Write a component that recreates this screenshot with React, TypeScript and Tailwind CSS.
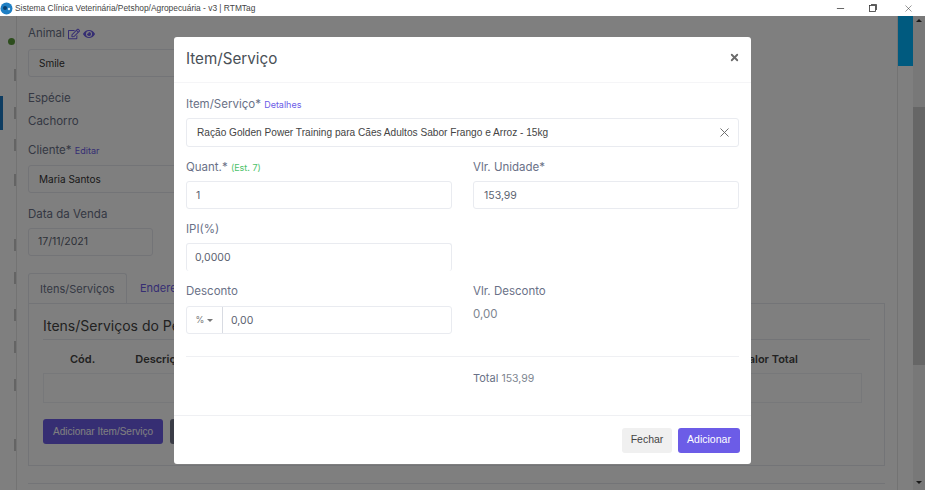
import { X, Minus } from 'lucide-react';
import { FaEye, FaRegEdit } from 'react-icons/fa';

const labelCls = "block text-[11.5px] leading-[16px] text-[#6a7187]";
const inputCls = "h-[28px] w-full rounded-[3px] border border-[#e9ebf0] bg-white text-[10.5px] leading-[27px] text-[#5b6270]";

function TitleBar() {
  return (
    <div className="flex h-[16px] items-center justify-between bg-white">
      <div className="flex items-center gap-[2px]">
        <svg width="13" height="13" viewBox="0 0 13 13">
          <circle cx="6.5" cy="6.5" r="6" fill="#1f7fc4" />
          <circle cx="5" cy="6" r="2" fill="#0b3f6e" />
          <circle cx="9" cy="7" r="1.2" fill="#cfe6f7" />
        </svg>
        <span className="text-[8.4px] leading-[16px] text-[#444]" style={{ fontFamily: '"Liberation Sans", sans-serif' }}>Sistema Clínica Veterinária/Petshop/Agropecuária - v3 | RTMTag</span>
      </div>
      <div className="flex items-center text-[#222]">
        <Minus className="mr-[23px] h-[11px] w-[11px]" strokeWidth={1.5} />
        <svg className="mr-[26px]" width="8" height="8" viewBox="0 0 8 8" fill="none" stroke="#333" strokeWidth="0.8">
          <rect x="0.5" y="1.5" width="6" height="6" />
          <path d="M2 0.5h5.5v5.5" />
        </svg>
        <X className="mr-[11px] h-[11px] w-[11px]" strokeWidth={1} />
      </div>
    </div>
  );
}

function Sidebar() {
  return (
    <div className="relative h-[474px] w-[17px] shrink-0 border-r border-[#e7e7e7] bg-white">
      <div className="absolute left-[8px] top-[22px] h-[7px] w-[7px] rounded-full bg-[#5a9a3a]" />
      <div className="absolute left-0 top-[80px] h-[34px] w-[3px] bg-[#1a78c2]" />
      {[53, 91, 123, 158, 223, 256, 293, 325, 363, 423].map((y) => (
        <div key={y} style={{ top: y }} className="absolute left-[14px] h-[12px] w-[2px] bg-[#c8c8c8]" />
      ))}
    </div>
  );
}

function PageBehind() {
  return (
    <div className="flex h-[474px] overflow-hidden bg-white" style={{ fontFamily: 'Inter, sans-serif' }}>
      <Sidebar />
      <div className="w-[880px] shrink-0 overflow-hidden px-[11px] pt-[10px] text-[#4b5563]">
        <div className="flex h-[16px] items-center gap-[3px] text-[11.5px] text-[#6a7187]">
          Animal
          <FaRegEdit className="h-[12px] w-[12px] text-[#6c5ce7]" />
          <FaEye className="h-[12px] w-[12px] text-[#6c5ce7]" />
        </div>
        <div className="mt-[7px] h-[28px] w-[300px] rounded-[3px] border border-[#e6e8ee] px-[10px] text-[10px] leading-[26px] text-[#333]">Smile</div>
        <div className="mt-[13px] text-[11.5px] leading-[16px] text-[#6a7187]">Espécie</div>
        <div className="mt-[7px] text-[11.5px] leading-[16px] text-[#6a7187]">Cachorro</div>
        <div className="mt-[13px] text-[11.5px] leading-[16px] text-[#6a7187]">
          Cliente* <span className="text-[9px] leading-none text-[#6c5ce7]">Editar</span>
        </div>
        <div className="mt-[7px] h-[28px] w-[300px] rounded-[3px] border border-[#e6e8ee] px-[10px] text-[10px] leading-[26px] text-[#333]">Maria Santos</div>
        <div className="mt-[13px] text-[11.5px] leading-[16px] text-[#6a7187]">Data da Venda</div>
        <div className="mt-[6px] h-[28px] w-[125px] rounded-[3px] border border-[#e6e8ee] px-[9px] text-[10.5px] leading-[26px] text-[#5b6270]">17/11/2021</div>

        <div className="mt-[17px] flex h-[30px] items-stretch text-[11px]">
          <div className="w-[99px] rounded-t-[3px] border border-b-0 border-[#e6e8ee] pl-[11px] leading-[31px] text-[#6a7187]">Itens/Serviços</div>
          <div className="pl-[13px] leading-[31px] text-[#6c5ce7]">Endereço</div>
        </div>
        <div className="h-[163px] w-[857px] border border-[#e6e8ee] px-[14px] pt-[13px]">
          <div className="border-b border-[#e6e8ee] pb-[4px] text-[14px] leading-[18px] text-[#444]">Itens/Serviços do Pedido</div>
          <div className="flex h-[33px] items-center pt-[6px] text-[11px] font-semibold text-[#444]">
            <span className="ml-[27px]">Cód.</span>
            <span className="ml-[40px]">Descrição</span>
            <span className="ml-auto mr-[72px]">Valor Total</span>
          </div>
          <div className="h-[30px] w-[819px] border border-[#eef0f4]" />
          <div className="mt-[16px] flex gap-[7px]">
            <button className="h-[25px] w-[120px] rounded-[3px] bg-[#6c5ce7] text-[10px] text-white" style={{ fontFamily: '"Liberation Sans", sans-serif' }}>Adicionar Item/Serviço</button>
            <button className="h-[25px] w-[80px] rounded-[3px] bg-[#74788d]" />
          </div>
        </div>
        <div className="mt-[17px] h-px w-[857px] bg-[#e6e8ee]" />
      </div>
      <div className="h-full w-[16px] shrink-0 border-l border-[#e7e7e7] bg-white">
        <div className="h-[50px] bg-[#00b4ff]" />
      </div>
      <div className="relative h-full w-[12px] shrink-0 bg-[#f0f0f0]">
        <div className="absolute left-[3px] top-[3px] h-0 w-0 border-x-[3px] border-b-[3px] border-x-transparent border-b-[#333]" />
        <div className="absolute left-0 right-0 top-[91px] h-[258px] bg-[#cdcdcd]" />
        <div className="absolute bottom-[6px] left-[3px] h-0 w-0 border-x-[3px] border-t-[3px] border-x-transparent border-t-[#333]" />
      </div>
    </div>
  );
}

function Modal() {
  return (
    <div className="absolute left-[174px] top-[37px] w-[577px] rounded-[3px] bg-white" style={{ fontFamily: 'Inter, sans-serif' }}>
      <div className="flex h-[46px] items-center justify-between border-b border-[#f5f5f7] pl-[12px] pr-[11px]">
        <h5 className="text-[15.2px] text-[#495057]">Item/Serviço</h5>
        <X className="mb-[4px] h-[11px] w-[11px] text-[#6b6b6b]" strokeWidth={4} />
      </div>

      <div className="px-[12px] pt-[13px]">
        <label className={labelCls}>
          Item/Serviço* <span className="text-[9px] leading-none text-[#6c5ce7]">Detalhes</span>
        </label>
        <div className="mt-[6px] flex h-[29px] items-center justify-between rounded-[3px] border border-[#e9ebf0] pl-[10px] pr-[6px]">
          <span className="text-[10.15px] text-[#444]" style={{ fontFamily: '"Liberation Sans", sans-serif' }}>Ração Golden Power Training para Cães Adultos Sabor Frango e Arroz - 15kg</span>
          <X className="h-[15px] w-[15px] text-[#666]" strokeWidth={1.5} />
        </div>

        <div className="mt-[12px] grid grid-cols-2 gap-x-[21px]">
          <div>
            <label className={labelCls}>
              Quant.* <span className="text-[9px] leading-none text-[#4cc26a]">(Est. 7)</span>
            </label>
            <div className={`mt-[6px] pl-[9px] ${inputCls}`}>1</div>
          </div>
          <div>
            <label className={labelCls}>Vlr. Unidade*</label>
            <div className={`mt-[6px] pl-[10px] ${inputCls}`}>153,99</div>
          </div>

          <div className="mt-[12px]">
            <label className={labelCls}>IPI(%)</label>
            <div className={`mt-[6px] pl-[8px] ${inputCls} border-b-0`}>0,0000</div>
          </div>
          <div />

          <div className="mt-[12px]">
            <label className={labelCls}>Desconto</label>
            <div className="mt-[7px] flex h-[28px] rounded-[3px] border border-[#e9ebf0]">
              <div className="flex w-[36px] items-center justify-center gap-[3px] border-r border-[#d8dbe2] text-[9px] text-[#777]">
                %<span className="h-0 w-0 border-x-[3px] border-t-[3px] border-x-transparent border-t-[#777]" />
              </div>
              <div className="pl-[8px] text-[10.5px] leading-[27px] text-[#5b6270]">0,00</div>
            </div>
          </div>
          <div className="mt-[12px]">
            <label className={labelCls}>Vlr. Desconto</label>
            <div className="mt-[7px] text-[11.5px] leading-[16px] text-[#7d8590]">0,00</div>
          </div>
        </div>

        <div className="mt-[22px] h-px bg-[#eff0f3]" />

        <div className="ml-[287px] mt-[13px] text-[11px] leading-[16px] text-[#6a7187]">
          Total <span className="text-[10.5px] leading-none text-[#7d8590]">153,99</span>
        </div>
      </div>

      <div className="mt-[29px] flex h-[49px] items-center justify-end gap-[6px] border-t border-[#eff0f3] px-[11px]">
        <button className="h-[25px] w-[50px] rounded-[3px] bg-[#f0f0f0] text-[10.5px] text-[#444]" style={{ fontFamily: '"Liberation Sans", sans-serif' }}>Fechar</button>
        <button className="h-[25px] w-[62px] rounded-[3px] bg-[#6c5ce7] text-[10.5px] text-white" style={{ fontFamily: '"Liberation Sans", sans-serif' }}>Adicionar</button>
      </div>
    </div>
  );
}

export default function App() {
  return (
    <div className="relative h-[490px] w-[925px] overflow-hidden">
      <TitleBar />
      <PageBehind />
      <div className="absolute inset-x-0 bottom-0 top-[16px] bg-black/50" />
      <Modal />
    </div>
  );
}
